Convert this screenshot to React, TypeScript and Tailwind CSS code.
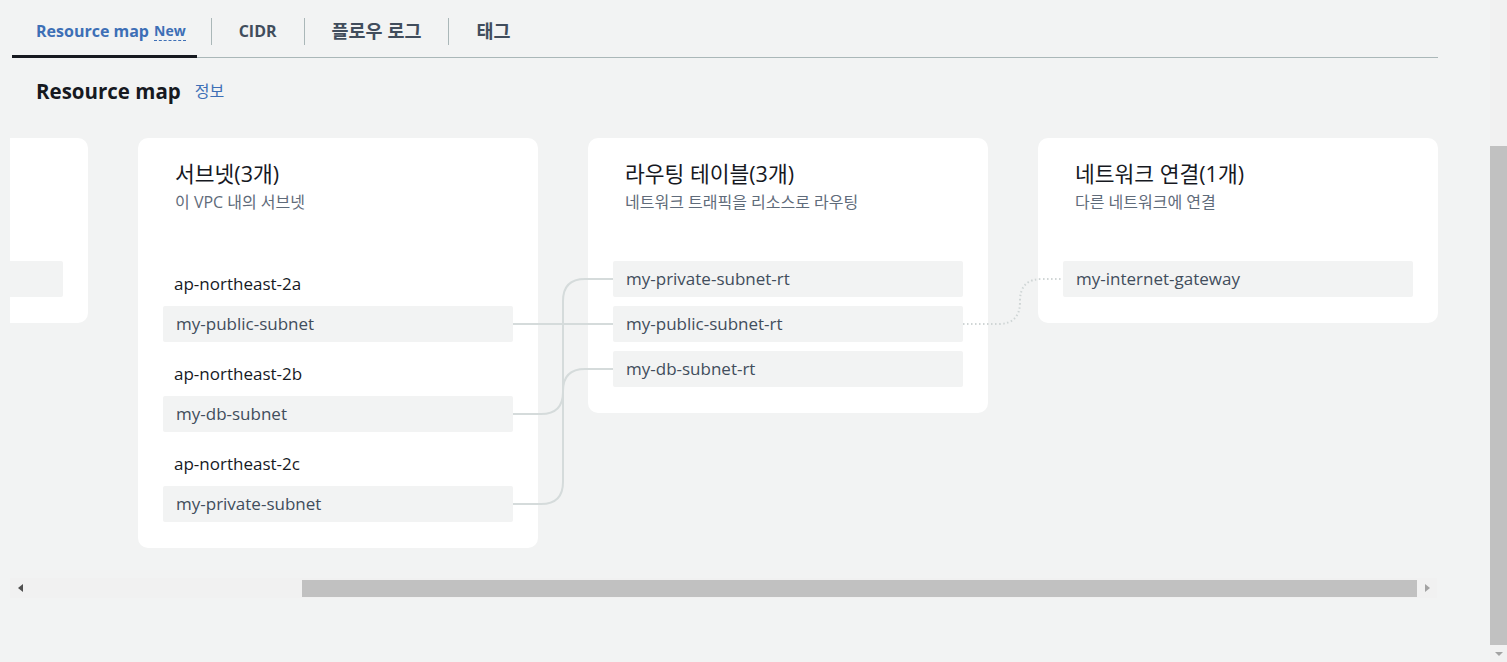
import type { ReactNode } from "react";

const FONT = "font-['Open_Sans','Noto_Sans_CJK_KR',sans-serif]";

type Group = { zone?: string; items: string[] };

type CardProps = {
  title?: string;
  subtitle?: string;
  groups: Group[];
};

function ItemBox({ label }: { label: string }) {
  return (
    <div className="flex h-[36px] items-center rounded-[2px] bg-[#f2f3f3] px-[13px] text-[17px] text-[#414d5c]">
      {label}
    </div>
  );
}

function MapCard({ title, subtitle, groups }: CardProps) {
  return (
    <div className="w-[400px] shrink-0 rounded-[10px] bg-white px-[25px] pb-[26px]">
      <div className="h-[123px] pl-[12px] pt-[22px]">
        <div className="text-[21.5px] leading-[28px] text-[#16191f]">{title}</div>
        <div className="mt-[3px] text-[16px] leading-[22px] text-[#5f6b7a]">{subtitle}</div>
      </div>
      <div className="flex flex-col gap-[9px]">
        {groups.map((group, i) => (
          <div key={i} className="flex flex-col gap-[9px]">
            {group.zone ? (
              <div className="-mb-[9px] flex h-[45px] items-center pl-[11px] text-[17px] text-[#16191f]">{group.zone}</div>
            ) : null}
            {group.items.map((item) => (
              <ItemBox key={item} label={item} />
            ))}
          </div>
        ))}
      </div>
    </div>
  );
}

function Tab({ children, active }: { children: ReactNode; active?: boolean }) {
  return (
    <div
      className={`relative flex h-full items-center font-bold ${active ? "pl-[24px] pr-[25px] text-[16px] text-[#3d6fb6]" : "px-[27px] text-[#414d5c]"}`}
    >
      {children}
      {active ? <div className="absolute bottom-[-1px] left-0 right-[14px] h-[3px] bg-[#16191f]" /> : null}
    </div>
  );
}

function TabDivider() {
  return <div className="h-[27px] w-px bg-[#aab7b8]" />;
}

function Connectors() {
  return (
    <svg className="pointer-events-none absolute left-0 top-0" width="1428" height="440" fill="none">
      <g stroke="#d5dbdb" strokeWidth="2">
        <path d="M503 186 H603" />
        <path d="M503 276 H531 Q553 276 553 254 V253 Q553 231 575 231 H603" />
        <path d="M503 366 H531 Q553 366 553 344 V163 Q553 141 575 141 H603" />
      </g>
      <path
        d="M953 186 H988 Q1010 186 1010 164 V163 Q1010 141 1032 141 H1053"
        stroke="#cfd5d5"
        strokeWidth="2"
        strokeDasharray="1.5 2.5"
      />
    </svg>
  );
}

export default function App() {
  return (
    <div className={`flex h-[662px] w-full overflow-hidden bg-[#f2f3f3] ${FONT}`}>
      <div className="min-w-0 flex-1 pl-[12px] pr-[52px]">
        <div className="flex h-[58px] items-center border-b border-[#aab7b8] pt-[5px]">
          <Tab active>
            Resource map
            <span className="ml-[5px] border-b border-dashed border-[#3d6fb6] text-[14px] leading-[18px]">New</span>
          </Tab>
          <TabDivider />
          <Tab>
            <span className="text-[16px]">CIDR</span>
          </Tab>
          <TabDivider />
          <Tab>
            <span className="text-[18.5px]">플로우 로그</span>
          </Tab>
          <TabDivider />
          <Tab>
            <span className="text-[18.5px]">태그</span>
          </Tab>
        </div>

        <div className="mt-[19px] flex items-center pl-[24px]">
          <h2 className="text-[20.5px] font-bold leading-[28px] text-[#16191f]">Resource map</h2>
          <span className="ml-[14px] text-[16px] text-[#3d6fb6]">정보</span>
        </div>

        <div className="relative -ml-[2px] mt-[33px] h-[440px] overflow-hidden">
          <div className="-ml-[322px] flex items-start gap-[50px]">
            <MapCard groups={[{ items: [""] }]} />
            <MapCard
              title="서브넷(3개)"
              subtitle="이 VPC 내의 서브넷"
              groups={[
                { zone: "ap-northeast-2a", items: ["my-public-subnet"] },
                { zone: "ap-northeast-2b", items: ["my-db-subnet"] },
                { zone: "ap-northeast-2c", items: ["my-private-subnet"] },
              ]}
            />
            <MapCard
              title="라우팅 테이블(3개)"
              subtitle="네트워크 트래픽을 리소스로 라우팅"
              groups={[{ items: ["my-private-subnet-rt", "my-public-subnet-rt", "my-db-subnet-rt"] }]}
            />
            <MapCard
              title="네트워크 연결(1개)"
              subtitle="다른 네트워크에 연결"
              groups={[{ items: ["my-internet-gateway"] }]}
            />
          </div>
          <Connectors />
        </div>

        <div className="-ml-[2px] mr-[1px] flex h-[20px] items-center bg-[#f1f1f1]">
          <div className="flex w-[20px] justify-center">
            <div className="h-0 w-0 border-y-[4px] border-r-[5px] border-y-transparent border-r-[#505050]" />
          </div>
          <div className="ml-[272px] h-[17px] w-[1115px] bg-[#c1c1c1]" />
          <div className="flex w-[20px] justify-center">
            <div className="h-0 w-0 border-y-[4px] border-l-[5px] border-y-transparent border-l-[#a3a3a3]" />
          </div>
        </div>
      </div>

      <div className="flex w-[17px] shrink-0 flex-col bg-[#f1f1f1]">
        <div className="mt-[146px] h-[499px] w-full bg-[#c1c1c1]" />
        <div className="flex flex-1 items-center justify-center">
          <div className="h-0 w-0 border-x-[4px] border-t-[4px] border-x-transparent border-t-[#a3a3a3]" />
        </div>
      </div>
    </div>
  );
}
